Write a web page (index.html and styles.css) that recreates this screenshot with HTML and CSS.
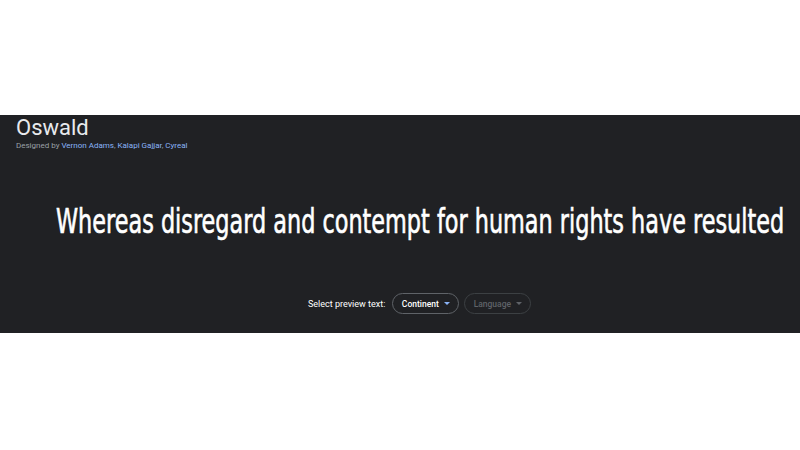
FILE: index.html
```html
<!DOCTYPE html>
<html>
<head>
<meta charset="utf-8">
<link rel="stylesheet" href="styles.css">
</head>
<body>
<div class="top-space"></div>
<section class="panel">
  <header class="family">
    <h1 class="family-name">Oswald</h1>
    <p class="designers">Designed by <a class="designer">Vernon Adams</a>, <a class="designer">Kalapi Gajjar</a>, <a class="designer">Cyreal</a></p>
  </header>
  <div class="preview">
    <p class="preview-text">Whereas disregard and contempt for human rights have resulted</p>
  </div>
  <div class="controls">
    <span class="controls-label">Select preview text:</span>
    <button class="pill">Continent <span class="caret"></span></button>
    <button class="pill pill-disabled">Language <span class="caret"></span></button>
  </div>
</section>
</body>
</html>
```
FILE: styles.css
```css
html, body {
  margin: 0;
  padding: 0;
  background: #ffffff;
}
body {
  width: 800px;
  height: 450px;
  overflow: hidden;
  font-family: Roboto, "Liberation Sans", sans-serif;
}
.top-space {
  height: 115px;
}
.panel {
  height: 218px;
  background: #202124;
  box-sizing: border-box;
  padding: 2px 0 0 0;
  display: flex;
  flex-direction: column;
}
.family {
  padding-left: 16px;
}
.family-name {
  margin: 0;
  font-size: 22px;
  line-height: 22px;
  font-weight: 400;
  color: #e8eaed;
  font-family: Roboto, "Open Sans", sans-serif;
}
.designers {
  margin: 2px 0 0 0;
  font-size: 8px;
  line-height: 10px;
  color: #9aa0a6;
}
.designer {
  color: #8ab4f8;
  text-decoration: none;
}
.preview {
  margin-top: 51px;
  padding-left: 56px;
  height: 40px;
}
.preview-text {
  margin: 0;
  font-family: "DejaVu Sans Condensed", "Liberation Sans Narrow", "Liberation Sans", sans-serif;
  font-size: 33px;
  line-height: 40px;
  color: #ffffff;
  -webkit-text-stroke: 0.6px #ffffff;
  white-space: nowrap;
  transform-origin: left center;
  transform: scaleX(0.753);
}
.controls {
  margin-top: 51px;
  padding-left: 308px;
  display: flex;
  align-items: center;
}
.controls-label {
  font-size: 9px;
  color: #ffffff;
  margin-right: 7px;
}
.pill {
  box-sizing: border-box;
  width: 67px;
  height: 21px;
  border: 1px solid #5f6368;
  border-radius: 11px;
  background: transparent;
  color: #ffffff;
  font-family: Roboto, "Liberation Sans", sans-serif;
  font-size: 8.5px;
  font-weight: 500;
  padding: 0;
  display: flex;
  align-items: center;
  justify-content: center;
  gap: 5px;
  margin-right: 5px;
}
.caret {
  width: 0;
  height: 0;
  border-left: 3px solid transparent;
  border-right: 3px solid transparent;
  border-top: 3px solid #8ab4f8;
}
.pill-disabled {
  color: #5f6368;
  border-color: #3c4043;
}
.pill-disabled .caret {
  border-top-color: #5f6368;
}
```
